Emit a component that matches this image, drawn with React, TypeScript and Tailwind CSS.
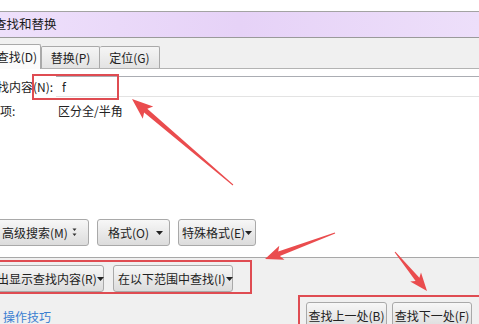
import React from 'react'

type Pt = [number, number]

// tapered annotation arrow: thin tail, wide head
function arrowPath(tail: Pt, tip: Pt, headLen: number, headW: number, tailW: number, neckW: number) {
  const dx = tip[0] - tail[0]
  const dy = tip[1] - tail[1]
  const len = Math.hypot(dx, dy)
  const ux = dx / len
  const uy = dy / len
  const px = -uy
  const py = ux
  const nx = tip[0] - ux * headLen
  const ny = tip[1] - uy * headLen
  const p = (x: number, y: number, s: number): string => `${(x + px * s).toFixed(1)},${(y + py * s).toFixed(1)}`
  return [
    p(tail[0], tail[1], tailW / 2),
    p(nx, ny, neckW / 2),
    p(nx - ux * 3, ny - uy * 3, headW / 2),
    `${tip[0]},${tip[1]}`,
    p(nx - ux * 3, ny - uy * 3, -headW / 2),
    p(nx, ny, -neckW / 2),
    p(tail[0], tail[1], -tailW / 2),
  ].join(' ')
}

const Caret = () => (
  <svg width="7" height="4" viewBox="0 0 7 4" className="shrink-0">
    <path d="M0 0H7L3.5 4Z" fill="#222" />
  </svg>
)

const MoreIcon = () => (
  <svg width="5" height="9" viewBox="0 0 5 9" className="shrink-0">
    <path d="M0.5 0.5H4.5L2.5 3Z M0.5 5.5H4.5L2.5 8Z" fill="#333" />
  </svg>
)

function Btn({ children, className = '' }: { children: React.ReactNode; className?: string }) {
  return (
    <div
      className={`flex items-center h-[27px] rounded-[3px] border border-[#a9a9a9] bg-gradient-to-b from-[#f7f7f7] to-[#dcdcdc] text-[12px] text-[#222] whitespace-nowrap ${className}`}
    >
      {children}
    </div>
  )
}

export default function App() {
  return (
    <div className="relative w-[479px] h-[324px] overflow-hidden bg-white font-['Noto_Sans_CJK_SC','Microsoft_YaHei',sans-serif] text-[12px] text-[#222]">
      {/* top strip of the page behind the dialog */}
      <div className="h-[11px] bg-white" />

      {/* title bar */}
      <div className="h-[27px] flex items-center border-t border-[#a3a3a3] border-b border-b-[#9a9a9a] bg-gradient-to-r from-[#eee0fb] via-[#e6d2f7] to-[#eddffa]">
        <span className="-ml-[6px] text-[12.5px] text-[#1b1b1b]">查找和替换</span>
      </div>

      {/* tabs */}
      <div className="h-[31px] flex items-end bg-[#f0f0f0] border-b border-[#b3b3b3]">
        <div className="-ml-[22px] w-[63px] h-[25px] -mb-px flex items-center justify-end pr-[3px] bg-[#fbfbfb] border border-b-0 border-[#a9a9a9] rounded-t-[2px]">
          查找(D)
        </div>
        <div className="w-[59px] h-[22px] flex items-center justify-center bg-gradient-to-b from-[#f5f5f5] to-[#e3e3e3] border border-[#a9a9a9] border-b-0 rounded-t-[2px]">
          替换(P)
        </div>
        <div className="w-[60px] h-[22px] flex items-center justify-center bg-gradient-to-b from-[#f5f5f5] to-[#e3e3e3] border border-l-0 border-[#a9a9a9] border-b-0 rounded-t-[2px]">
          定位(G)
        </div>
      </div>

      {/* find content */}
      <div className="h-[188px] flex flex-col">
        <div className="mt-[7px] flex items-center h-[21px]">
          <span className="-ml-[15px] w-[71px] shrink-0 whitespace-nowrap">查找内容(N):</span>
          <div className="flex-1 h-[21px] flex items-center pl-[6px] border-t border-[#abadb3] border-b border-b-[#e3e3e3]">
            f
          </div>
        </div>
        <div className="mt-[5px] flex items-center h-[18px]">
          <span className="-ml-[12px] w-[70px] shrink-0">选项:</span>
          <span>区分全/半角</span>
        </div>

        <div className="mt-auto mb-[11px] flex items-center gap-[8px]">
          <Btn className="-ml-[12px] w-[101px] pl-[13px] pr-[11px] justify-between">
            <span>高级搜索(M)</span>
            <MoreIcon />
          </Btn>
          <Btn className="w-[73px] pl-[10px] pr-[6px] justify-between">
            <span>格式(O)</span>
            <Caret />
          </Btn>
          <Btn className="w-[78px] pl-[3px] pr-[4px] justify-between">
            <span>特殊格式(E)</span>
            <Caret />
          </Btn>
        </div>
      </div>

      {/* bottom area */}
      <div className="h-[67px] bg-[#f0f0f0] border-t border-[#a8a8a8] flex flex-col">
        <div className="mt-[7px] flex items-center gap-[9px]">
          <Btn className="-ml-[20px] w-[124px] pl-[4px] pr-[5px] justify-between">
            <span>突出显示查找内容(R)</span>
            <Caret />
          </Btn>
          <Btn className="w-[120px] pl-[4px] pr-[5px] justify-between">
            <span>在以下范围中查找(I)</span>
            <Caret />
          </Btn>
        </div>
        <div className="mt-[10px] flex items-start">
          <span className="mt-[6px] ml-[3px] text-[#3b7fd0]">操作技巧</span>
          <div className="ml-auto mr-[7px] flex gap-[5px]">
            <Btn className="w-[81px] justify-center">查找上一处(B)</Btn>
            <Btn className="w-[80px] justify-center border-[#3c9fd6] from-[#eaf6fd] to-[#cde8f7]">查找下一处(F)</Btn>
          </div>
        </div>
      </div>

      {/* annotation boxes */}
      <div className="absolute left-[32px] top-[74px] w-[87px] h-[26px] border-2 border-[#df4c52]" />
      <div className="absolute -left-[10px] top-[260px] w-[262px] h-[34px] border-2 border-[#df4c52]" />
      <div className="absolute left-[298px] top-[295px] w-[190px] h-[40px] border-2 border-[#df4c52]" />

      {/* annotation arrows */}
      <svg className="absolute inset-0 pointer-events-none" width="479" height="324">
        <polygon points={arrowPath([233, 185], [132, 99], 18, 16, 1, 5)} fill="#ea4c4e" />
        <polygon points={arrowPath([335, 233], [265, 259], 15, 15, 1, 5)} fill="#ea4c4e" />
        <polygon points={arrowPath([395, 252], [427, 291], 15, 14, 1, 5)} fill="#ea4c4e" />
      </svg>
    </div>
  )
}
